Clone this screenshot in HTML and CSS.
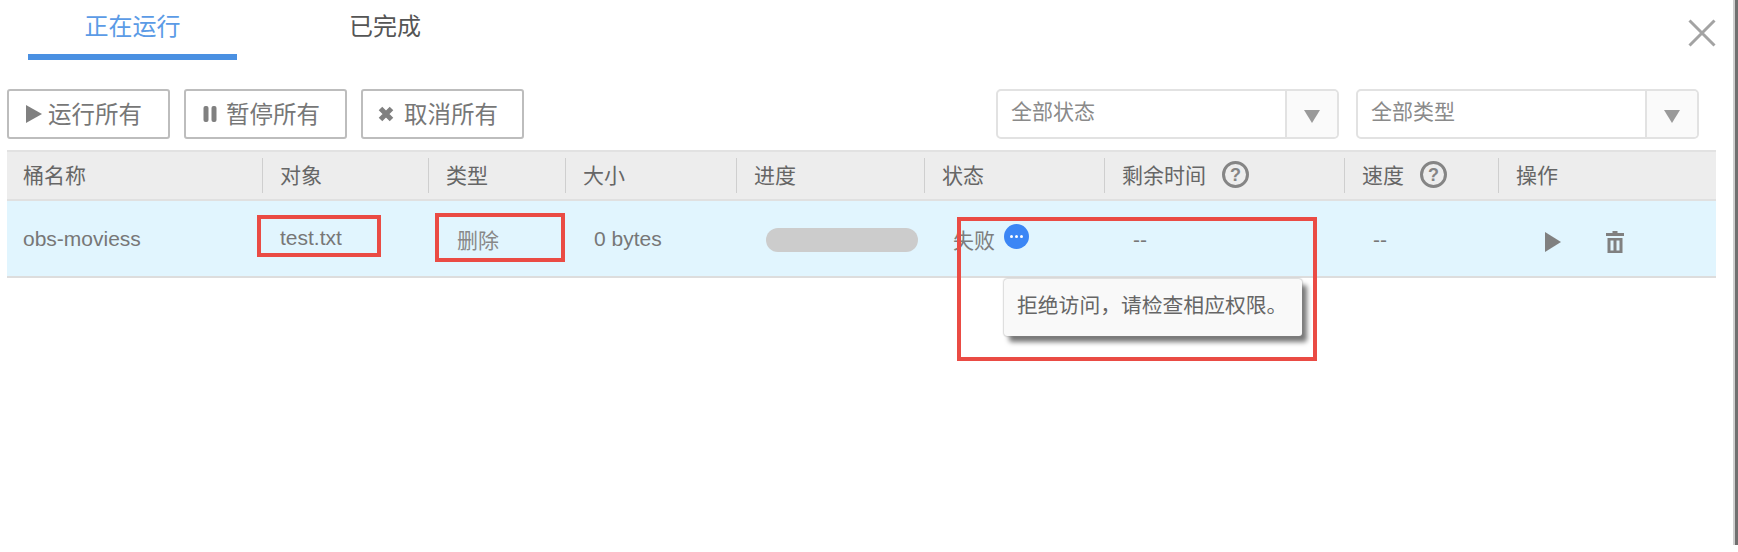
FILE: index.html
```html
<!DOCTYPE html>
<html lang="zh-CN">
<head>
<meta charset="utf-8">
<title>任务管理</title>
<link rel="stylesheet" href="styles.css">
</head>
<body>
<div class="panel">
  <div class="tabs">
    <div class="tab active">正在运行</div>
    <div class="tab done">已完成</div>
    <svg class="close" width="28" height="28" viewBox="0 0 28 28"><path d="M1.5 1.5 26.5 26.5M26.5 1.5 1.5 26.5" stroke="#a3a3a3" stroke-width="3" fill="none"/></svg>
  </div>
  <div class="toolbar">
    <button class="btn"><svg class="btn-icon" width="16" height="18" viewBox="0 0 16 18"><path d="M0 0 16 9 0 18Z" fill="#808080"/></svg>运行所有</button>
    <button class="btn btn-pause"><svg class="btn-icon" width="14" height="16" viewBox="0 0 14 16"><rect x="0.5" width="5" height="16" rx="2" fill="#808080"/><rect x="8.500" width="5" height="16" rx="2" fill="#808080"/></svg>暂停所有</button>
    <button class="btn btn-cancel"><svg class="btn-icon" width="16" height="16" viewBox="0 0 16 16"><path d="M2.5 2.5 13.5 13.5M13.5 2.5 2.5 13.5" stroke="#808080" stroke-width="5" fill="none"/></svg>取消所有</button>
    <div class="select select-first"><span class="select-text">全部状态</span><span class="select-arrow"><i class="tri"></i></span></div>
    <div class="select"><span class="select-text">全部类型</span><span class="select-arrow"><i class="tri"></i></span></div>
  </div>
  <div class="table">
    <div class="row head">
      <div class="cell">桶名称</div>
      <div class="cell">对象</div>
      <div class="cell">类型</div>
      <div class="cell">大小</div>
      <div class="cell">进度</div>
      <div class="cell">状态</div>
      <div class="cell">剩余时间<svg class="help" width="29" height="29" viewBox="0 0 29 29"><circle cx="14.5" cy="14.5" r="12" fill="none" stroke="#858585" stroke-width="3"/><text x="14.5" y="20.500" text-anchor="middle" class="help-q">?</text></svg></div>
      <div class="cell">速度<svg class="help" width="29" height="29" viewBox="0 0 29 29"><circle cx="14.5" cy="14.5" r="12" fill="none" stroke="#858585" stroke-width="3"/><text x="14.5" y="20.500" text-anchor="middle" class="help-q">?</text></svg></div>
      <div class="cell">操作</div>
    </div>
    <div class="row body">
      <div class="cell">obs-moviess</div>
      <div class="cell cell-obj">test.txt</div>
      <div class="cell cell-type">删除</div>
      <div class="cell cell-size">0 bytes</div>
      <div class="cell cell-progress"><div class="bar"></div></div>
      <div class="cell cell-status">失败<span class="dot"><i></i><i></i><i></i></span></div>
      <div class="cell cell-dash">--</div>
      <div class="cell cell-dash">--</div>
      <div class="cell cell-ops">
        <svg width="16" height="20" viewBox="0 0 16 20"><path d="M0 0 16 10 0 20Z" fill="#808080"/></svg>
        <svg class="trash" width="18" height="22" viewBox="0 0 18 22"><path d="M6.500 0h5v2H18v3H0V2h6.500ZM1.500 7h15v15h-15Zm3 2.500v10h3v-10Zm6 0v10h3v-10Z" fill="#808080" fill-rule="evenodd"/></svg>
      </div>
    </div>
  </div>
  <div class="tooltip">拒绝访问&#xFF0C;请检查相应权限。</div>
  <div class="mark mark-obj"></div>
  <div class="mark mark-type"></div>
  <div class="mark mark-status"></div>
  <div class="edge"></div>
</div>
</body>
</html>
```
FILE: styles.css
```css
* { box-sizing: border-box; }
html, body { margin: 0; padding: 0; background: #fff; }
body {
  font-family: "Liberation Sans", "Noto Sans CJK SC", sans-serif;
  color: #757575;
  overflow: hidden;
}
.panel { position: relative; width: 1738px; height: 552px; }

.tabs { display: flex; width: 1716px; height: 60px; padding-left: 28px; }
.tab {
  width: 209px;
  height: 60px;
  padding-top: 8px;
  font-size: 24px;
  line-height: 38px;
  text-align: center;
  color: #555;
}
.tab.active { color: #5b9be6; border-bottom: 6px solid #4a90e2; }
.tab.done { width: 180px; margin-left: 58px; }
.close { margin: 19px 0 0 auto; }

.toolbar { display: flex; width: 1716px; margin-top: 29px; padding: 0 17px 0 7px; }
.btn {
  display: flex;
  align-items: center;
  width: 163px;
  height: 50px;
  margin-right: 14px;
  padding: 0 0 2px 17px;
  border: 2px solid #bdbdbd;
  border-radius: 3px;
  background: #fff;
  font-family: inherit;
  font-size: 23.500px;
  color: #777;
}
.btn-icon { margin: 2px 6px 0 0; flex: none; }
.btn-pause { padding-left: 17px; }
.btn-pause .btn-icon { margin-right: 9px; }
.btn-cancel { margin-right: 0; padding-left: 15px; }
.btn-cancel .btn-icon { margin-right: 10px; }

.select {
  display: flex;
  justify-content: space-between;
  width: 343px;
  height: 50px;
  margin-left: 17px;
  border: 2px solid #e2e2e2;
  border-radius: 5px;
  background: #fff;
}
.select-first { margin-left: auto; }
.select-text { padding: 4px 0 0 13px; font-size: 21px; line-height: 34px; color: #8a8a8a; }
.select-arrow {
  display: flex;
  align-items: center;
  justify-content: center;
  width: 52px;
  padding-top: 4px;
  border-left: 2px solid #e2e2e2;
  background: #fafafa;
  border-radius: 0 4px 4px 0;
}
.tri {
  width: 0;
  height: 0;
  border-left: 8px solid transparent;
  border-right: 8px solid transparent;
  border-top: 13px solid #9a9a9a;
}

.table { margin: 11px 0 0 7px; width: 1709px; }
.row {
  display: grid;
  grid-template-columns: 255px 166px 137px 171px 188px 180px 240px 154px 218px;
}
.head {
  height: 51px;
  background: #ededed;
  border-top: 2px solid #e2e2e2;
  border-bottom: 2px solid #e0e0e0;
  font-size: 21px;
  color: #666;
}
.head .cell {
  display: flex;
  align-items: center;
  height: 35px;
  margin-top: 6px;
  padding: 0 0 4px 17px;
  border-left: 1px solid #cfcfcf;
}
.head .cell:first-child { padding-left: 16px; border-left: 0; }
.help { margin: 0 0 -2px 15px; }
.help-q { font-family: "Liberation Sans", sans-serif; font-size: 18px; font-weight: 700; fill: #858585; }

.body {
  height: 77px;
  background: #e1f5fe;
  border-bottom: 2px solid #dddddd;
  font-size: 21px;
  color: #777;
}
.body .cell { display: flex; align-items: center; padding: 0 0 0 17px; }
.body .cell:first-child { padding-left: 16px; }
.body .cell-obj { padding: 0 0 1px 18px; }
.body .cell-type { padding: 0 0 0 29px; color: #888; }
.body .cell-size { padding-left: 29px; }
.body .cell-progress { padding: 3px 0 0 30px; }
.bar { width: 152px; height: 24px; border-radius: 12px; background: #cccccc; }
.body .cell-status { padding: 0 0 0 29px; color: #7d7d7d; }
.dot {
  display: flex;
  align-items: center;
  justify-content: center;
  gap: 2px;
  width: 25px;
  height: 25px;
  margin: 0 0 4px 9px;
  border-radius: 50%;
  background: #3b86f5;
}
.dot i { width: 3px; height: 3px; border-radius: 50%; background: #fff; }
.body .cell-dash { padding: 3px 0 0 29px; }
.body .cell-ops { padding: 6px 0 0 47px; }
.trash { margin-left: 45px; }

.tooltip {
  position: absolute;
  left: 1004px;
  top: 279px;
  width: 298px;
  height: 57px;
  padding-left: 13px;
  border-radius: 3px;
  background: #f9f9f9;
  box-shadow: 0 0 2px #888, 5px 6px 5px #777;
  font-size: 20.800px;
  line-height: 54px;
  color: #666;
  white-space: nowrap;
}
.mark { position: absolute; border: 4px solid #ea4b44; }
.mark-obj { left: 257px; top: 215px; width: 124px; height: 42px; }
.mark-type { left: 435px; top: 213px; width: 130px; height: 49px; }
.mark-status { left: 957px; top: 217px; width: 360px; height: 144px; }
.edge {
  position: absolute;
  right: 0;
  top: 0;
  width: 5px;
  height: 545px;
  border-left: 2px solid #cfcfcf;
  background: #707070;
}
```
